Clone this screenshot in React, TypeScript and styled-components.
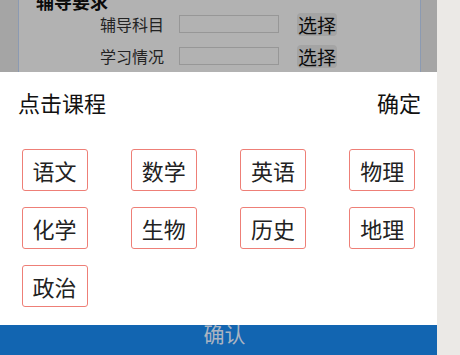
import styled, { createGlobalStyle } from "styled-components";

const GlobalStyle = createGlobalStyle`
  html, body {
    margin: 0;
    padding: 0;
    background: #ebe9e6;
    font-family: "Noto Sans CJK SC", "Noto Sans", sans-serif;
  }
`;

const subjects = ["语文", "数学", "英语", "物理", "化学", "生物", "历史", "地理", "政治"];

export default function App() {
  return (
    <>
      <GlobalStyle />
      <Screen>
        <FormArea>
          <Card>
            <CardTitle>辅导要求</CardTitle>
            <Rows>
              <Row>
                <Label>辅导科目</Label>
                <Field readOnly />
                <PickButton>选择</PickButton>
              </Row>
              <Row>
                <Label>学习情况</Label>
                <Field readOnly />
                <PickButton>选择</PickButton>
              </Row>
            </Rows>
          </Card>
        </FormArea>

        <Footer>
          <FooterText>确认</FooterText>
        </Footer>

        <Mask />

        <Sheet>
          <SheetHeader>
            <span>点击课程</span>
            <span>确定</span>
          </SheetHeader>
          <SubjectGrid>
            {subjects.map((s) => (
              <SubjectCell key={s}>
                <SubjectTag>{s}</SubjectTag>
              </SubjectCell>
            ))}
          </SubjectGrid>
        </Sheet>
      </Screen>
    </>
  );
}

const Screen = styled.div`
  position: relative;
  width: 437px;
  height: 355px;
  overflow: hidden;
  background: #ececec;
  display: flex;
  flex-direction: column;
`;

const FormArea = styled.div`
  flex: 1;
  padding: 0 16px 0 18px;
  overflow: hidden;
`;

const Card = styled.div`
  margin-top: -9px;
  height: 400px;
  background: #fff;
  border: 1px solid #c8ddff;
`;

const CardTitle = styled.div`
  padding-left: 17px;
  font-size: 18px;
  line-height: 18px;
  font-weight: bold;
  color: #111;
`;

const Rows = styled.div`
  display: flex;
  flex-direction: column;
  gap: 4px;
`;

const Row = styled.div`
  display: flex;
  align-items: center;
  height: 28px;
  padding-left: 81px;
`;

const Label = styled.span`
  width: 64px;
  margin-right: 15px;
  font-size: 16px;
  color: #333;
  white-space: nowrap;
`;

const Field = styled.input`
  box-sizing: border-box;
  width: 100px;
  height: 18px;
  margin: 0;
  padding: 0;
  border: 1px solid #d9d9d9;
  background: #fff;
`;

const PickButton = styled.button`
  margin-left: 18px;
  height: 23px;
  padding: 0 1px;
  border: none;
  border-radius: 4px;
  background: #ebebeb;
  font-family: inherit;
  font-size: 19px;
  line-height: 23px;
  color: #111;
`;

const Footer = styled.div`
  position: relative;
  z-index: 2;
  height: 44px;
  flex-shrink: 0;
  padding-left: 12px;
  background: #1265b1;
  display: flex;
  justify-content: center;
  align-items: center;
`;

const FooterText = styled.span`
  font-size: 21px;
  line-height: 44px;
  color: #aab4c2;
`;

const Mask = styled.div`
  position: absolute;
  inset: 0;
  z-index: 1;
  background: rgba(0, 0, 0, 0.3);
`;

const Sheet = styled.div`
  position: absolute;
  z-index: 3;
  top: 72px;
  left: 0;
  right: 0;
  bottom: 30px;
  background: #fff;
`;

const SheetHeader = styled.div`
  height: 60px;
  padding: 0 16px 0 18px;
  display: flex;
  justify-content: space-between;
  align-items: center;
  font-size: 22px;
  color: #111;
`;

const SubjectGrid = styled.div`
  display: grid;
  grid-template-columns: repeat(4, 1fr);
  row-gap: 16px;
  padding-top: 17px;
`;

const SubjectCell = styled.div`
  display: flex;
  justify-content: center;
`;

const SubjectTag = styled.div`
  padding: 6px 10px;
  border: 1px solid #ee7f77;
  border-radius: 3px;
  font-size: 22px;
  line-height: 28px;
  color: #222;
`;
